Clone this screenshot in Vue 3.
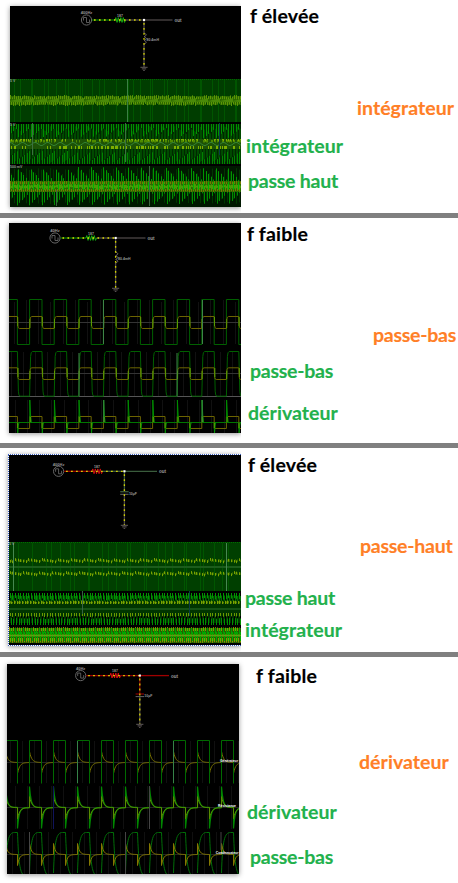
<script setup>
const cycle = (list, i) => list[((i % list.length) + list.length) % list.length]

function bars(x0, x1, step, span) {
  let d = ''
  for (let x = x0, i = 0; x < x1; x += step, i++) {
    const s = span(x, i)
    if (s) d += `M${Math.floor(x) + 0.5} ${s[0].toFixed(1)}V${s[1].toFixed(1)}`
  }
  return d
}
const phase = (x, p) => (((x % p) + p) % p) / p
const noise = (i) => {
  const v = Math.sin(i * 12.9898) * 43758.5453
  return v - Math.floor(v)
}

/* Section 1: dense RL traces */
const m1 = 12.4
const s1 = [
  { c: '#003d00', w: 1, d: bars(10, 241, 1, () => [79, 122]) },
  { c: '#005500', w: 1, d: bars(10, 241, 1, (x, i) => (i % 12 === 10 || i % 17 === 4 ? [80, 122] : null)) },
  { c: '#006400', w: 1, d: bars(10, 241, 2, () => [79, 80]) },
  { c: '#2a6800', w: 1, d: bars(10, 241, 1, (x) => (phase(x - 9, m1) < 0.85 ? [96, 105] : [98, 102])) },
  { c: '#5c9606', w: 1, d: bars(10, 241, 2, (x, i) => {
    const p = phase(x - 9, m1)
    return [95 + 2.5 * noise(i), 99 + p]
  }) },
  { c: '#5c9606', w: 1, d: bars(11, 241, 2, (x, i) => [102, 103.5 + 2.5 * noise(i + 9)]) },
  { c: '#4a8a08', w: 1, d: bars(10, 241, 1, (x) => {
    const p = phase(x - 9, m1)
    return [101 - 2.6 * p, 101.5 + p]
  }) },
  { c: '#3b8044', w: 1, d: 'M127.5 79V122' },

  { c: '#002800', w: 1, d: bars(10, 241, 1, () => [124, 164]) },
  { c: '#004a00', w: 1, d: bars(10, 241, 1, (x, i) => (i % 3 ? [126 + 8 * phase(x, m1), 163 - 9 * phase(x, m1)] : null)) },
  { c: '#009000', w: 1, d: bars(11, 241, 2.5, (x) => [124, 128 + 10 * (1 - phase(x - 5, m1))]) },
  { c: '#008300', w: 1, d: bars(12, 241, 2.5, (x) => [151 + 9 * (1 - phase(x - 5, m1)), 164]) },
  { c: '#1d5206', w: 1, d: bars(10, 241, 1, () => [139, 149]) },
  { c: '#7cae00', w: 1, d: bars(10, 241, 1, (x, i) => (noise(i) > 0.62 ? [139, 141.6] : null)) },
  { c: '#4d8a00', w: 1, d: bars(10, 241, 1, (x, i) => (noise(i + 11) > 0.6 ? [140, 142.5] : null)) },
  { c: '#7cae00', w: 1, d: bars(10, 241, 1, (x, i) => (noise(i + 40) > 0.62 ? [146, 149] : null)) },
  { c: '#338033', w: 1, d: bars(10, 241, 1, (x) => {
    const y = 144 + 1.5 * Math.sin(x / 2)
    return [y - 0.5, y + 0.5]
  }) },
  { c: '#3c7040', w: 1, d: 'M32.5 123V155M125.5 123V162' },
  { c: '#0c3848', w: 1, d: 'M219.5 123V155' },

  { c: '#001800', w: 1, d: bars(10, 241, 1, () => [166, 207]) },
  { c: '#003800', w: 1, d: bars(10, 241, 1, (x, i) => (i % 3 === 1 ? [168 + 6 * phase(x, m1), 204 - 6 * phase(x, m1)] : null)) },
  { c: '#009600', w: 1, d: bars(11, 241, 2.5, (x) => [167 + 14 * phase(x - 4, m1), 184]) },
  { c: '#008d00', w: 1, d: bars(12, 241, 2.5, (x) => [190, 206 - 13 * phase(x - 4, m1)]) },
  { c: '#286b00', w: 1, d: bars(10, 241, 1, () => [181, 192]) },
  { c: '#4a9b08', w: 1, d: bars(10, 241, 1, (x, i) => [184 + 2 * noise(i), 187 + 3 * noise(i + 3)]) },
  { c: '#777800', w: 1, d: bars(10, 241, 2, (x, i) => [181 + noise(i), 184]) },
  { c: '#777800', w: 1, d: bars(11, 241, 2, (x, i) => [189, 191 + noise(i)]) },
  { c: '#00b600', w: 1, d: bars(13, 241, 5, () => [182, 190]) },
  { c: '#3c6540', w: 1, d: 'M56.5 190V206M149.5 166V206' },
]

/* Section 3: dense RC traces */
const s3 = [
  { c: '#003f00', w: 1, d: bars(9, 241, 1, () => [542, 591]) },
  { c: '#005600', w: 1, d: bars(9, 241, 1, (x, i) => (i % 14 === 9 || i % 19 === 4 ? [543, 591] : null)) },
  { c: '#006c00', w: 1, d: bars(9, 241, 2, () => [542, 543]) },
  { c: '#2e6600', w: 1, d: bars(11, 241, 2.67, (x, i) => [559 + noise(i), 562]) },
  { c: '#79a300', w: 1, d: bars(10, 241, 2.67, (x) => { const y = 558 + 2.6 * phase(x, 14); return [y, y + 2.8] }) },
  { c: '#2e6600', w: 1, d: bars(11, 241, 2.67, (x, i) => [572 + noise(i), 575]) },
  { c: '#79a300', w: 1, d: bars(10, 241, 2.67, (x) => { const y = 571 + 2.6 * phase(x + 5, 14); return [y, y + 2.8] }) },
  { c: '#1c5c1c', w: 2, d: 'M9 567H241' },
  { c: '#468850', w: 1, d: 'M13.5 543V591M226.5 543V591' },

  { c: '#003500', w: 1, d: bars(9, 241, 1, (x, i) => [i % 3 ? 595 : 600, i % 3 ? 623 : 616]) },
  { c: '#009400', w: 1, d: bars(10, 241, 2.67, (x, i) => [593, 598 + 2 * noise(i)]) },
  { c: '#006b00', w: 1, d: bars(11, 241, 2.67, () => [596, 601]) },
  { c: '#7aa500', w: 1, d: bars(9, 241, 2.67, (x, i) => [600.5 + noise(i), 604]) },
  { c: '#527f00', w: 1, d: bars(10, 241, 2.67, (x, i) => [601 + noise(i), 603.5]) },
  { c: '#6a9800', w: 1, d: bars(10, 241, 2.67, (x, i) => [613, 616 + noise(i)]) },
  { c: '#008e00', w: 1, d: bars(11, 241, 2.67, (x, i) => [618 + noise(i), 625]) },
  { c: '#1c5c1c', w: 1.5, d: 'M9 609H241' },
  { c: '#356044', w: 1, d: 'M82.5 591V614' },
  { c: '#0c3b45', w: 1, d: 'M189.5 591V616' },

  { c: '#246000', w: 1, d: bars(9, 241, 1, () => [628, 643]) },
  { c: '#8c9000', w: 1, d: bars(9, 241, 2, (x, i) => [627 + noise(i), 631]) },
  { c: '#00a400', w: 1, d: bars(10, 241, 2.67, (x, i) => [628, 636 - 3 * noise(i)]) },
  { c: '#438e00', w: 3, d: 'M9 635.5H241' },
  { c: '#879400', w: 1, d: bars(10, 241, 2, (x, i) => [638, 642 + noise(i)]) },
  { c: '#00aa00', w: 1, d: bars(11, 241, 2.67, () => [632, 641]) },
  { c: '#5f9c14', w: 1, d: 'M9 635.5H241' },
]

/* Section 2: slow RL traces */
const P2 = 24.6
function square(top, bottom, soft, lag = 0) {
  let d = `M9 ${top}`
  for (let k = 0; k < 10; k++) {
    const f = 17.4 + k * P2
    const r = f + 12.2
    d += `H${f}`
    d += soft
      ? `L${f + lag} ${bottom - soft}Q${f + lag + 0.3} ${bottom} ${f + lag + 1.5} ${bottom}H${r}L${r + lag} ${top + soft}Q${r + lag + 0.3} ${top} ${r + lag + 1.8} ${top}`
      : `V${bottom}H${r}V${top}`
  }
  return d
}
let spikes2 = ''
let glow2 = ''
for (let k = 0; k < 10; k++) {
  const f = 17.4 + k * P2
  spikes2 += `M${f} 422.5L${f + 0.3} 433L${f + 1} 425L${f + 1.6} 422.5`
  if (k < 9) spikes2 += `M${f + 12.4} 422.5V400L${f + 13.2} 416L${f + 14} 422.5`
  glow2 += `M${f + 0.3} 317V326M${f + 12.5} 319V328M${f + 0.6} 368V377M${f + 12.5} 371V379M${f + 0.2} 423V428M${f + 13} 417V422`
}
const grid2 = bars(14, 241, 12.3, (x, i) => [i % 3 ? 300 : 302, 344]) +
  bars(11, 241, 12.3, () => [352, 396]) + bars(15, 241, 12.3, () => [400, 433])
const s2 = [
  { c: '#111', w: 1, d: grid2 },
  { c: '#343434', w: 1, d: 'M9 322.5H241M9 373.5H241' },
  { c: '#555', w: 1, d: 'M9 396.5H241' },
  { c: '#006000', w: 1, d: square(299.5, 344.5, 0) + square(351.5, 396.2, 5, 1) },
  { c: '#007600', w: 1, d: 'M9 422.5H241' },
  { c: '#6c6400', w: 1, d: square(316.5, 328.5, 3, 0.4) + square(367.8, 379.5, 2, 0.5) + square(416.5, 428.5, 0) },
  { c: '#008d00', w: 1, d: spikes2 },
  { c: '#5b9a00', w: 1, d: glow2 },
  { c: '#3e8548', w: 1, d: 'M103.5 300V344M202.5 300V344M79 353V396M177 353V396M103.8 400V422M202.2 400V422' },
]

/* Section 4: slow RC traces */
function decay(mid, amp, tau) {
  let d = ''
  for (let k = -1; k < 19; k++) {
    const x0 = 17.5 + k * 12
    const sign = k % 2 === 0 ? 1 : -1
    for (let t = 0; t <= 12; t += 0.75) {
      const y = mid + sign * amp * Math.exp(-t / tau)
      d += `${d ? 'L' : 'M'}${(x0 + t).toFixed(2)} ${y.toFixed(2)}`
    }
  }
  return d
}
let cap = ''
let gen = ''
for (let k = -1; k < 10; k++) {
  const r = 29.5 + k * 24
  cap += `M${r} 873C${r + 1} 840 ${r + 3} 832.5 ${r + 9} 832.5H${r + 12}C${r + 12.8} 853 ${r + 13.5} 869 ${r + 17} 874`
  gen += `M${r} 783.5V740.5H${r + 12}V783.5`
}
const grid4 = bars(10, 239, 12, () => [741, 783]) + bars(15, 239, 12, () => [786, 829]) + bars(12, 239, 12, () => [832, 874])
const s4 = [
  { c: '#101010', w: 1, d: grid4 },
  { c: '#242424', w: 1, d: 'M7 762.5H239M7 807.5H239M7 854.5H239' },
  { c: '#766e00', w: 1, d: decay(762.5, 11, 2.2) },
  { c: '#006a00', w: 1, d: gen },
  { c: '#008700', w: 1.2, d: decay(807.5, 21, 1.7) },
  { c: '#598d00', w: 1, d: decay(807.7, 11, 2.3) },
  { c: '#006e08', w: 1, d: cap },
  { c: '#847800', w: 1, d: decay(854.5, 11, 1.9) },
  { c: '#368348', w: 1, d: 'M77.5 741V783M173.5 741V783' },
  { c: '#454545', w: 1, d: 'M29.5 832V874M125.5 832V874M149.5 786V829M221 832V850' },
  { c: '#10145c', w: 1, d: 'M53.5 786V829' },
]

const G = '#007400'
const R = '#a00000'
const N = '#4c4646'
const sections = [
  {
    id: 'rl-high', box: [10, 6, 231, 201], traces: s1, cx: 86.5, cy: 20, freq: '400Hz',
    rx: 115, nx: 144, ox: 172.5, ty: 33, by: 67, kind: 'L', a: G, ra: '#12a812', b: N, c: N, v1: N, v2: N,
    tags: [], units: [[10, 82, '5 V'], [10, 125.5, '5 V'], [10, 168, '500 mV']],
    notes: [['f élevée', 'black'], ['intégrateur', 'orange'], ['intégrateur', 'green'], ['passe haut', 'green']],
  },
  {
    id: 'rl-low', box: [9, 223, 232, 210], traces: s2, cx: 55, cy: 238, freq: '40Hz',
    rx: 86, nx: 115.6, ox: 145.5, ty: 252, by: 288, kind: 'L', a: G, ra: '#12a812', b: N, c: N, v1: N, v2: N,
    tags: [], units: [],
    notes: [['f faible', 'black'], ['passe-bas', 'orange'], ['passe-bas', 'green'], ['dérivateur', 'green']],
  },
  {
    id: 'rc-high', box: [9, 455, 232, 190], traces: s3, cx: 58.6, cy: 471.3, freq: '400Hz',
    rx: 92, nx: 124.4, ox: 157, ty: 491.7, by: 525, kind: 'C', a: R, ra: '#d01010', b: '#3e5a3e', c: '#3a5c3c', v1: '#3e5a3e', v2: N,
    tags: [], units: [[9, 545, '5 V']],
    notes: [['f élevée', 'black'], ['passe-haut', 'orange'], ['passe haut', 'green'], ['intégrateur', 'green']],
  },
  {
    id: 'rc-low', box: [7, 664, 232, 210], traces: s4, cx: 80.7, cy: 675.6, freq: '40Hz',
    rx: 110, nx: 139.8, ox: 169, ty: 694, by: 724, kind: 'C', a: R, ra: '#e01010', b: '#8c0000', c: '#a00000', v1: '#800000', v2: N,
    tags: [[238, 761.5, 'Générateur'], [236, 806.5, 'Résistance'], [238.5, 853.5, 'Condensateur']], units: [],
    notes: [['f faible', 'black'], ['dérivateur', 'orange'], ['dérivateur', 'green'], ['passe-bas', 'green']],
  },
]
const zigzag = (x, y) => {
  let d = `M${x} ${y}`
  for (let i = 0; i < 8; i++) d += `L${x + 0.8 + i * 1.25} ${y + cycle([-2.4, 2.4], i)}`
  return d + `L${x + 10.5} ${y}`
}
</script>

<template>
  <main class="sheet">
    <section v-for="s in sections" :key="s.id" class="row" :class="s.id">
      <div class="scope">
        <svg :width="s.box[2]" :height="s.box[3]" :viewBox="s.box.join(' ')">
          <rect :x="s.box[0]" :y="s.box[1]" :width="s.box[2]" :height="s.box[3]" fill="#000" />
          <g fill="none">
            <path v-for="(t, i) in s.traces" :key="i" :d="t.d" :stroke="t.c" :stroke-width="t.w" />
          </g>
          <g fill="none" stroke-width="1.3">
            <circle :cx="s.cx" :cy="s.cy" r="5.1" stroke="#666" stroke-width="1" />
            <path :d="`M${s.cx - 3} ${s.cy + 0.5}V${s.cy - 2.5}H${s.cx}V${s.cy + 2.5}H${s.cx + 3}V${s.cy - 0.5}`" stroke="#707070" stroke-width="0.8" />
            <path :d="`M${s.cx + 5.6} ${s.cy}H${s.rx}`" :stroke="s.a" />
            <path :d="`M${s.rx + 10.5} ${s.cy}H${s.nx}`" :stroke="s.b" />
            <path :d="`M${s.nx} ${s.cy}H${s.ox}`" :stroke="s.c" />
            <path :d="`M${s.nx} ${s.cy}V${s.ty}`" :stroke="s.v1" />
            <path :d="zigzag(s.rx, s.cy)" :stroke="s.ra" stroke-width="1" />
            <template v-if="s.kind === 'L'">
              <path :d="`M${s.nx} ${s.ty + 11}V${s.by}`" :stroke="s.v2" />
              <path :d="`M${s.nx} ${s.ty}q4.5 1.8 0 3.7q4.5 1.8 0 3.7q4.5 1.8 0 3.7`" stroke="#746a6a" stroke-width="0.9" />
            </template>
            <template v-else>
              <path :d="`M${s.nx} ${s.ty + 2.4}V${s.by}`" :stroke="s.v2" />
              <path :d="`M${s.nx - 4.2} ${s.ty}h8.4`" :stroke="s.v1" />
              <path :d="`M${s.nx - 4.2} ${s.ty + 2.6}h8.4`" stroke="#666" stroke-width="1" />
            </template>
            <path :d="`M${s.cx + 7.5} ${s.cy}H${s.nx}`" stroke="#e0e000" stroke-dasharray="1.6 3.4" />
            <path :d="`M${s.nx} ${s.cy + 3}V${s.by}`" stroke="#d2d200" stroke-dasharray="1.8 3.2" />
            <path :d="`M${s.nx - 3.6} ${s.by + 0.3}h7.2m-5.8 1.6h4.4m-3 1.5h1.6`" stroke="#6c6464" stroke-width="0.9" />
          </g>
          <rect :x="s.nx - 1" :y="s.cy - 1.1" width="2.1" height="2.1" fill="#fff" />
          <g class="tiny">
            <text :x="s.cx" :y="s.cy - 5.6" text-anchor="middle">{{ s.freq }}</text>
            <text :x="s.rx + 5" :y="s.cy - 3.4" text-anchor="middle" class="value">187</text>
            <text :x="s.ox + 2" :y="s.cy + 2" class="out">out</text>
            <text v-if="s.kind === 'L'" :x="s.nx + 2.5" :y="s.ty + 7.8" class="value">80.4mH</text>
            <text v-else :x="s.nx + 4.5" :y="s.ty + 2.8" class="value">10µF</text>
            <text v-for="u in s.units" :key="u[1]" :x="u[0]" :y="u[1]" class="value">{{ u[2] }}</text>
          </g>
          <text v-for="t in s.tags" :key="t[2]" class="tag" :x="t[0]" :y="t[1]" text-anchor="end">{{ t[2] }}</text>
        </svg>
      </div>
      <div class="notes">
        <p v-for="(n, i) in s.notes" :key="i" :class="['note', n[1], `n${i}`, { roomy: n[0].endsWith('eur') }]">{{ n[0] }}</p>
      </div>
    </section>
  </main>
</template>

<style>
body {
  margin: 0;
  background: #fff;
}
</style>

<style scoped>
.sheet {
  width: 458px;
  height: 883px;
  display: grid;
  grid-template-rows: 218px 230px 209px 226px;
  overflow: hidden;
  background: #fff;
}
.row {
  box-sizing: border-box;
  display: flex;
  align-items: flex-start;
  border-bottom: 5px solid #808080;
  overflow: hidden;
}
.rc-low { border-bottom: 0; }
.scope {
  flex: none;
  box-shadow: 0 1px 5px rgba(0, 0, 0, 0.42);
  clip-path: inset(-8px 0 -8px -8px);
}
.scope svg { display: block; }
.rl-high .scope { margin: 6px 0 0 10px; }
.rl-low .scope { margin: 5px 0 0 9px; }
.rc-high .scope {
  margin: 6px 0 0 8px;
  border: 1px dotted #3d62c4;
  border-right: 0;
}
.rc-low .scope {
  margin: 7px 2px 0 7px;
  clip-path: none;
}
.tiny {
  font: bold 4px "Liberation Sans", sans-serif;
  fill: #999;
}
.value { font-size: 3.5px; }
.out { font-size: 4.6px; }
.tag {
  font: bold 3.4px "Liberation Sans", sans-serif;
  fill: #fff;
}
.notes {
  flex: 1;
  display: flex;
  flex-direction: column;
  align-items: flex-start;
}
.note {
  margin: 0;
  font: 700 19.5px/24px Lato, "Open Sans", sans-serif;
  letter-spacing: -0.25px;
  white-space: nowrap;
  -webkit-text-stroke: 0.15px currentColor;
}
.note.roomy { letter-spacing: 0.05px; }
.note.black {
  color: #000;
  letter-spacing: 0.2px;
}
.orange { color: #ff7f27; }
.green { color: #22b14c; }

.rl-high .n0 { margin: 4px 0 0 9px; }
.rl-high .n1 { margin: 68px 0 0 116px; }
.rl-high .n2 { margin: 14px 0 0 5px; }
.rl-high .n3 { margin: 11px 0 0 7px; }

.rl-low .n0 { margin: 4px 0 0 6px; }
.rl-low .n1 { margin: 77px 0 0 132px; }
.rl-low .n2 { margin: 12px 0 0 9px; }
.rl-low .n3 { margin: 18px 0 0 7px; }

.rc-high .n0 { margin: 5px 0 0 7px; }
.rc-high .n1 { margin: 57px 0 0 119px; }
.rc-high .n2 { margin: 28px 0 0 4px; }
.rc-high .n3 { margin: 8px 0 0 4px; }

.rc-low .n0 { margin: 7px 0 0 15px; }
.rc-low .n1 { margin: 62px 0 0 118px; }
.rc-low .n2 { margin: 26px 0 0 6px; }
.rc-low .n3 { margin: 21px 0 0 9px; }
</style>
